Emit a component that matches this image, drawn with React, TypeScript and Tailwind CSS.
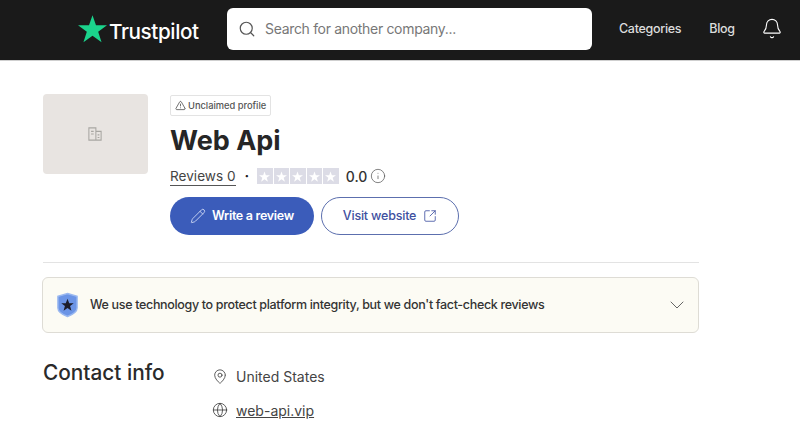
import { Search, Bell, TriangleAlert, Pencil, SquareArrowOutUpRight, Info, ChevronDown, MapPin, Globe } from 'lucide-react';

const font = "font-['Inter','Liberation_Sans',sans-serif]";

function Star({ className }: { className?: string }) {
  return (
    <svg viewBox="0 0 24 24" className={className} fill="currentColor">
      <path d="M12 1l2.9 8.4H24l-7.3 5.3 2.8 8.6L12 18l-7.5 5.3 2.8-8.6L0 9.4h9.1z" />
    </svg>
  );
}

function Building() {
  return (
    <svg viewBox="0 0 16 16" className="-ml-[2px] w-[16px] h-[14px] text-[#a8a6a2]" fill="none" stroke="currentColor" strokeWidth="1.2">
      <path d="M1 15V1h8v4h6v10zM9 5v10" />
      <path d="M3.5 5h3M3.5 8h3M11 9h2M11 12h2" />
    </svg>
  );
}

function Shield() {
  return (
    <svg viewBox="0 0 24 26" className="w-[23px] h-[26px]">
      <path d="M12 1l10 3v12c0 4-5 7-10 9C7 23 2 20 2 16V4z" fill="#6b94e6" stroke="#9ab8f0" strokeWidth="1.5" />
      <path d="M12 6.5l1.8 4.6h4.7l-3.8 3 1.4 4.8-4.1-2.8-4.1 2.8 1.4-4.8-3.8-3h4.7z" fill="#1c1c2a" />
    </svg>
  );
}

export default function App() {
  return (
    <div className={`${font} w-[800px] h-[431px] overflow-hidden bg-white text-[#1c1c1c]`}>
      {/* Header */}
      <header className="h-[61px] pb-[3px] bg-[#1a1a1a] border-b border-[#cfcfcf] flex items-center">
        <div className="ml-[78px] w-[122px] flex items-center text-white">
          <Star className="w-[29px] h-[29px] text-[#1bd38c] shrink-0" />
          <span className="ml-[2px] text-[20.7px] font-medium tracking-[-0.4px] mt-[6px]">Trustpilot</span>
        </div>
        <div className="ml-[27px] w-[365px] h-[42px] bg-white rounded-[6px] flex items-center pl-[11px]">
          <Search className="w-[18px] h-[18px] text-[#555]" strokeWidth={1.6} />
          <span className="ml-[9px] text-[14px] tracking-[-0.32px] text-[#777]">Search for another company...</span>
        </div>
        <span className="ml-[27px] mt-[2px] text-[12.5px] tracking-[-0.3px] font-medium text-[#dcdcdc]">Categories</span>
        <span className="ml-[28px] mt-[2px] text-[12.5px] tracking-[-0.3px] font-medium text-[#dcdcdc]">Blog</span>
        <Bell className="ml-[26px] w-[22px] h-[23px] text-white" strokeWidth={1.2} />
      </header>

      <main className="pl-[43px] w-[699px]">
        {/* Company */}
        <section className="flex pt-[33px] h-[202px] border-b border-[#e3e3e3]">
          <div className="w-[105px] h-[80px] bg-[#e8e4e1] rounded-[4px] flex items-center justify-center shrink-0">
            <Building />
          </div>
          <div className="ml-[22px] flex flex-col items-start">
            <div className="mt-[1px] h-[21px] px-[4px] border border-[#e3e3e3] rounded-[2px] flex items-center gap-[2px] text-[9.3px] font-medium text-[#555]">
              <TriangleAlert className="w-[11px] h-[11px] text-[#333]" strokeWidth={1.5} />
              Unclaimed profile
            </div>
            <h1 className="mt-[8px] text-[27px] leading-[34px] font-bold text-[#262626]">Web Api</h1>
            <div className="mt-[7px] flex items-center h-[22px]">
              <span className="text-[13.6px] text-[#444] border-b border-[#555] leading-[18px]">Reviews 0</span>
              <span className="ml-[9px] text-[14px] font-bold leading-none">·</span>
              <div className="ml-[8px] flex gap-[1px]">
                {[0, 1, 2, 3, 4].map((i) => (
                  <div key={i} className="w-[15.5px] h-[15.5px] bg-[#dcdce6] flex items-center justify-center">
                    <Star className="w-[11px] h-[11px] text-white" />
                  </div>
                ))}
              </div>
              <span className="ml-[7px] text-[14px] font-medium text-[#333]">0.0</span>
              <Info className="ml-[3px] w-[16px] h-[16px] text-[#555]" strokeWidth={1.1} />
            </div>
            <div className="mt-[10px] flex gap-[7px]">
              <div className="w-[144px] h-[38px] rounded-full bg-[#3b5cba] text-white flex items-center justify-center gap-[6px] text-[12.5px] tracking-[-0.3px] font-semibold">
                <Pencil className="w-[16px] h-[16px] text-[#c9d4f2]" strokeWidth={1.4} />
                Write a review
              </div>
              <div className="w-[138px] h-[38px] rounded-full border border-[#5c6fae] text-[#3e50a0] flex items-center justify-center gap-[7px] text-[12.5px] tracking-[-0.2px] font-medium">
                Visit website
                <SquareArrowOutUpRight className="w-[14px] h-[14px]" strokeWidth={1.4} />
              </div>
            </div>
          </div>
        </section>

        {/* Notice */}
        <div className="-ml-[1px] mt-[14px] h-[56px] bg-[#fcfbf4] border border-[#dedcd5] rounded-[6px] flex items-center pl-[13px] pr-[9px]">
          <Shield />
          <span className="ml-[11px] text-[12.5px] tracking-[-0.33px] font-medium text-[#333]">
            We use technology to protect platform integrity, but we don't fact-check reviews
          </span>
          <ChevronDown className="ml-auto w-[24px] h-[24px] text-[#555]" strokeWidth={0.9} />
        </div>

        {/* Contact */}
        <section className="mt-[23px] flex items-start">
          <h2 className="w-[169px] text-[20.8px] leading-[34px] font-medium text-[#2a2a2a]">Contact info</h2>
          <div className="flex flex-col gap-[14px] pt-[10px] text-[14px] text-[#444]">
            <div className="flex items-center gap-[8px] h-[20px]">
              <MapPin className="w-[16px] h-[17px]" strokeWidth={1.3} />
              United States
            </div>
            <div className="flex items-center gap-[8px] h-[20px]">
              <Globe className="w-[16px] h-[16px]" strokeWidth={1.3} />
              <span className="underline">web-api.vip</span>
            </div>
          </div>
        </section>
      </main>
    </div>
  );
}
